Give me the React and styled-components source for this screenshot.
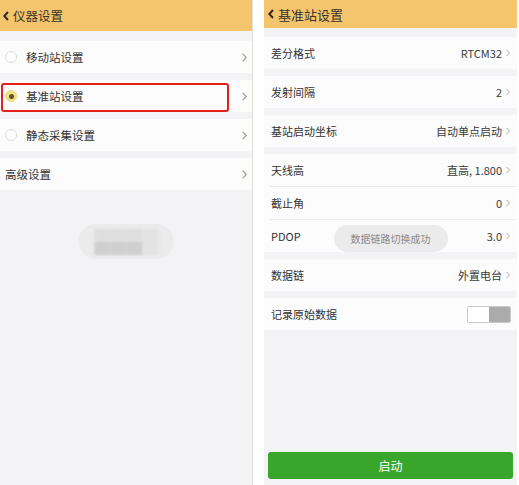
import React from "react";
import styled, { createGlobalStyle } from "styled-components";

const GlobalStyle = createGlobalStyle`
  html, body {
    margin: 0;
    padding: 0;
    background: #ffffff;
    font-family: "Noto Sans CJK SC", "Noto Sans", "Liberation Sans", sans-serif;
    color: #333;
  }
`;

const Screen = styled.div`
  display: flex;
  gap: 11px;
  width: 519px;
  height: 485px;
  overflow: hidden;
`;

const Panel = styled.div`
  position: relative;
  width: ${(p) => p.$width}px;
  height: 485px;
  background: #f3f2f5;
  display: flex;
  flex-direction: column;
  border-right: ${(p) => (p.$edge ? "1px solid #e2e4dc" : "none")};
  box-sizing: border-box;
`;

const Header = styled.div`
  height: ${(p) => p.$height}px;
  flex-shrink: 0;
  background: #f4c56d;
  display: flex;
  align-items: center;
  gap: 4px;
  padding-left: ${(p) => p.$pad}px;
  font-size: ${(p) => p.$size}px;
  color: #3a3328;
`;

const List = styled.div`
  display: flex;
  flex-direction: column;
  gap: 7px;
  padding-top: ${(p) => p.$top}px;
`;

const Row = styled.div`
  position: relative;
  height: ${(p) => p.$height || 32}px;
  background: #fcfcfc;
  display: flex;
  align-items: center;
  padding: 0 ${(p) => p.$right}px 0 ${(p) => p.$left}px;
  font-size: ${(p) => p.$size}px;
  color: #333;
`;

const Group = styled.div`
  background: #fcfcfc;
  display: flex;
  flex-direction: column;
`;

const Divider = styled.div`
  height: 1px;
  margin-left: 6px;
  background: #ececec;
`;

const Label = styled.span`
  flex: 1;
  white-space: nowrap;
`;

const Value = styled.span`
  margin-right: 4px;
  white-space: nowrap;
  color: #3a3a3a;
`;

const Radio = styled.span`
  width: 12px;
  height: 12px;
  border-radius: 50%;
  box-sizing: border-box;
  margin-right: 9px;
  flex-shrink: 0;
  display: flex;
  align-items: center;
  justify-content: center;
  border: 1px solid ${(p) => (p.$on ? "#efdc86" : "#dcdcdc")};
  background: ${(p) => (p.$on ? "#f3e27c" : "#ffffff")};
  &::after {
    content: "";
    display: ${(p) => (p.$on ? "block" : "none")};
    width: 5px;
    height: 5px;
    border-radius: 50%;
    background: #5e5230;
  }
`;

const Highlight = styled.div`
  position: absolute;
  left: 1px;
  top: 3px;
  width: 228px;
  height: 29px;
  box-sizing: border-box;
  border: 2.5px solid #e5201b;
  border-radius: 3px;
`;

const Toggle = styled.div`
  width: 44px;
  height: 17px;
  box-sizing: border-box;
  border: 1px solid #c9c9c9;
  border-radius: 2px;
  display: flex;
  overflow: hidden;
  & > span:first-child {
    flex: 1;
    background: #ffffff;
  }
  & > span:last-child {
    flex: 1;
    background: #ababab;
  }
`;

const Toast = styled.div`
  position: absolute;
  left: 50%;
  top: ${(p) => p.$top}px;
  transform: translateX(-50%);
  width: ${(p) => p.$w}px;
  height: ${(p) => p.$h}px;
  border-radius: ${(p) => p.$h / 2}px;
  background: #ebebeb;
  display: flex;
  align-items: center;
  justify-content: center;
  font-size: 10px;
  color: #8a8a8a;
  white-space: nowrap;
`;

const Pixelated = styled.div`
  display: grid;
  grid-template-columns: repeat(4, 16px);
  grid-template-rows: 13px 13px;
  filter: blur(1px);
  & > span {
    background: #dedede;
  }
  & > span:nth-child(n + 5) {
    background: #cfcfcf;
  }
  & > span:nth-child(4),
  & > span:nth-child(8) {
    background: #e3e3e3;
  }
`;

const StartButton = styled.button`
  margin: auto 4px 6px;
  height: 27px;
  border: none;
  border-radius: 3px;
  background: #38a62b;
  color: #ffffff;
  font-family: inherit;
  font-size: 12px;
`;

const Chevron = ({ w = 5, h = 9, color = "#9a9a9a" }) => (
  <svg width={w} height={h} viewBox="0 0 5 9" fill="none">
    <polyline points="0.6,0.6 4.3,4.5 0.6,8.4" stroke={color} strokeWidth="1.1" />
  </svg>
);

const Back = () => (
  <svg width="6" height="10" viewBox="0 0 6 10" fill="none">
    <polyline points="5,1 1.3,5 5,9" stroke="#2e2a22" strokeWidth="2" />
  </svg>
);

const modes = [
  { label: "移动站设置", on: false },
  { label: "基准站设置", on: true },
  { label: "静态采集设置", on: false },
];

function InstrumentSettings() {
  return (
    <Panel $width={253} $edge>
      <Header $height={31} $pad={3} $size={12.5}>
        <Back />
        仪器设置
      </Header>
      <List $top={10}>
        {modes.map((m) => (
          <Row key={m.label} $left={5} $right={5} $size={11.5}>
            <Radio $on={m.on} />
            <Label>{m.label}</Label>
            <Chevron />
            {m.on && <Highlight />}
          </Row>
        ))}
        <Row $left={5} $right={5} $size={11.5}>
          <Label>高级设置</Label>
          <Chevron />
        </Row>
      </List>
      <Toast $top={224} $w={95} $h={35}>
        <Pixelated>
          {Array.from({ length: 8 }).map((_, i) => (
            <span key={i} />
          ))}
        </Pixelated>
      </Toast>
    </Panel>
  );
}

const ValueRow = ({ label, value, height }) => (
  <Row $left={7} $right={7} $size={11} $height={height}>
    <Label>{label}</Label>
    <Value>{value}</Value>
    <Chevron w={4} h={8} color="#a0a0a0" />
  </Row>
);

function BaseStationSettings() {
  return (
    <Panel $width={253}>
      <Header $height={28} $pad={4} $size={13}>
        <Back />
        基准站设置
      </Header>
      <List $top={9}>
        <ValueRow label="差分格式" value="RTCM32" />
        <ValueRow label="发射间隔" value="2" />
        <ValueRow label="基站启动坐标" value="自动单点启动" />
        <Group>
          <ValueRow label="天线高" value="直高, 1.800" height={32} />
          <Divider />
          <ValueRow label="截止角" value="0" height={32} />
          <Divider />
          <ValueRow label="PDOP" value="3.0" height={32} />
        </Group>
        <ValueRow label="数据链" value="外置电台" />
        <Row $left={7} $right={6} $size={11}>
          <Label>记录原始数据</Label>
          <Toggle>
            <span />
            <span />
          </Toggle>
        </Row>
      </List>
      <Toast $top={225} $w={114} $h={27}>
        数据链路切换成功
      </Toast>
      <StartButton>启动</StartButton>
    </Panel>
  );
}

export default function App() {
  return (
    <>
      <GlobalStyle />
      <Screen>
        <InstrumentSettings />
        <BaseStationSettings />
      </Screen>
    </>
  );
}
